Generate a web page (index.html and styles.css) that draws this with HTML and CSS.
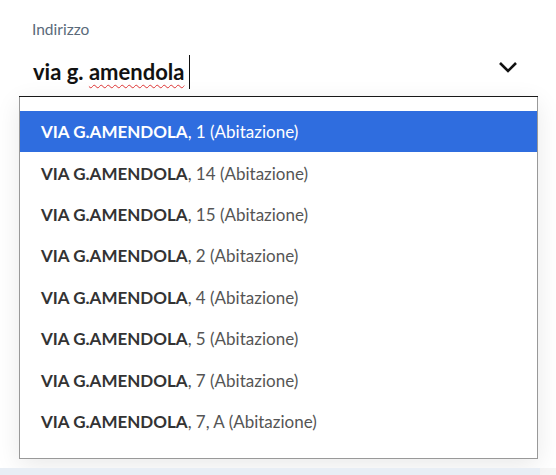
FILE: index.html
```html
<!DOCTYPE html>
<html lang="it">
<head>
  <meta charset="UTF-8">
  <meta name="viewport" content="width=device-width, initial-scale=1.0">
  <title>Indirizzo</title>
  <link rel="stylesheet" href="styles.css">
</head>
<body>
  <div class="field">
    <label class="field-label">Indirizzo</label>
    <div class="input-row">
      <span class="input-value">via g. <span class="typo">amendola</span></span>
      <span class="caret"></span>
      <svg class="chevron" width="20" height="12" viewBox="0 0 20 12">
        <path d="M2 2 L10 10 L18 2" fill="none" stroke="#111" stroke-width="2.6"/>
      </svg>
    </div>

    <!-- elenco suggerimenti -->
    <ul class="options">
      <li class="active"><b>VIA G.AMENDOLA</b>, 1 (Abitazione)</li>
      <li><b>VIA G.AMENDOLA</b>, 14 (Abitazione)</li>
      <li><b>VIA G.AMENDOLA</b>, 15 (Abitazione)</li>
      <li><b>VIA G.AMENDOLA</b>, 2 (Abitazione)</li>
      <li><b>VIA G.AMENDOLA</b>, 4 (Abitazione)</li>
      <li><b>VIA G.AMENDOLA</b>, 5 (Abitazione)</li>
      <li><b>VIA G.AMENDOLA</b>, 7 (Abitazione)</li>
      <li><b>VIA G.AMENDOLA</b>, 7, A (Abitazione)</li>
    </ul>
  </div>
  <div class="next-band"></div>
</body>
</html>
```
FILE: styles.css
```css
* {
  box-sizing: border-box;
}

body {
  margin: 0;
  font-family: 'Lato', 'Open Sans', sans-serif;
  background: #f6f6f6;
  color: #333;
}

.field {
  background: #fff;
  padding: 19px 18px 0 19px;
  height: 468px;
}

.field-label {
  display: block;
  margin-left: 13px;
  font-size: 15.5px;
  color: #5a6a7a;
  line-height: 20px;
}

.input-row {
  display: flex;
  align-items: center;
  height: 58px;
  padding: 8px 20px 0 14px;
  border-bottom: 1px solid #1a1a1a;
}

.input-value {
  font-size: 22px;
  font-weight: 700;
  color: #111;
}

.typo {
  text-decoration: underline wavy #d33;
  text-decoration-thickness: 1px;
  text-underline-offset: 4px;
}

.caret {
  width: 1px;
  height: 34px;
  background: #111;
  margin-left: 5px;
}

.chevron {
  margin-left: auto;
  margin-top: -10px;
}

.options {
  list-style: none;
  margin: 0;
  padding: 14px 0 16px;
  border: 1px solid #999;
  border-top: none;
  background: #fff;
  box-shadow: 0 6px 24px rgba(0,0,0,0.09);
}

.options li {
  height: 41.4px;
  display: flex;
  align-items: center;
  padding-left: 21px;
  font-size: 17px;
  color: #555;
}

.options li b {
  color: #333;
}

.options li.active {
  background: #2f6ddf;
  color: #fff;
}

.options li.active b {
  color: #fff;
}

.next-band {
  width: 540px;
  height: 7px;
  background: #e8eef5;
}
```
